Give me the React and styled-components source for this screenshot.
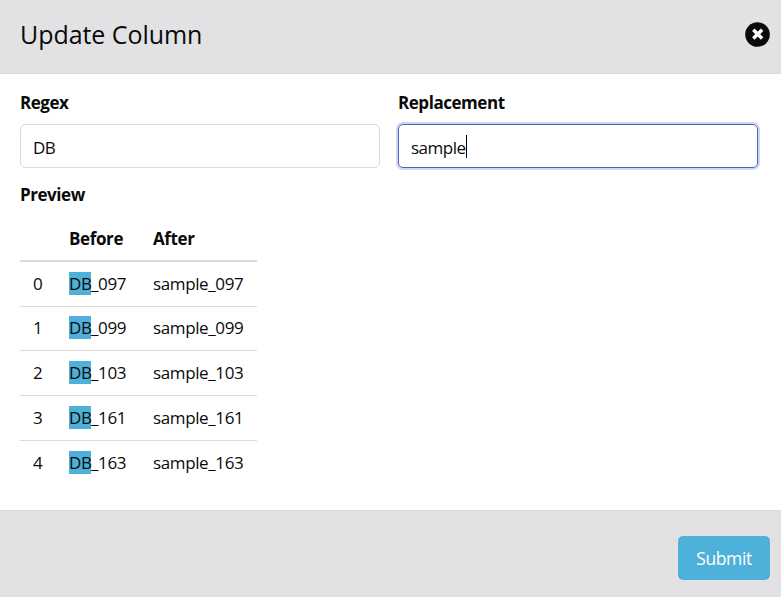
import React from "react";
import styled, { createGlobalStyle } from "styled-components";

const GlobalStyle = createGlobalStyle`
  *, *::before, *::after { box-sizing: border-box; }
  body {
    margin: 0;
    background: #fff;
    color: #0a0a0a;
    font-family: "Open Sans", "Noto Sans", sans-serif;
    font-size: 17px;
    line-height: 24px;
    font-weight: 400;
  }
`;

const Dialog = styled.div`
  display: flex;
  flex-direction: column;
  height: 597px;
  overflow: hidden;
`;

const Header = styled.header`
  display: flex;
  align-items: center;
  justify-content: space-between;
  height: 74px;
  padding: 0 11px 4px 20px;
  background: #e2e2e4;
  border-bottom: 1px solid #d8d9da;
`;

const Title = styled.h1`
  margin: 0 0 2px;
  font-size: 25px;
  line-height: 36px;
  font-weight: 400;
  letter-spacing: -0.05px;
`;

const CloseButton = styled.button`
  display: block;
  width: 25px;
  height: 25px;
  padding: 0;
  border: 0;
  background: none;

  svg { display: block; }
`;

const Body = styled.main`
  flex: 1;
  padding: 17px 23px 0 20px;
`;

const Fields = styled.div`
  display: grid;
  grid-template-columns: 360px 360px;
  column-gap: 18px;
`;

const Label = styled.div`
  font-weight: 700;
  letter-spacing: -0.45px;
`;

const Input = styled.div`
  display: flex;
  align-items: center;
  height: 44px;
  margin-top: 9px;
  padding: 3px 12px 0;
  border: 1px solid ${(p) => (p.$focused ? "#485fc7" : "#dbdbdb")};
  border-radius: 5px;
  box-shadow: ${(p) => (p.$focused ? "0 0 0 2px #d2d7f1" : "none")};
  letter-spacing: -0.5px;
`;

const Caret = styled.span`
  width: 1px;
  height: 23px;
  margin-bottom: 2px;
  background: #000;
`;

const Preview = styled.section`
  margin-top: 15px;
`;

const Table = styled.table`
  width: 237px;
  margin-top: 10px;
  table-layout: fixed;
  border-collapse: separate;
  border-spacing: 0;
  letter-spacing: -0.38px;
`;

const Col = styled.col`
  width: ${(p) => p.$width}px;
`;

const HeadCell = styled.th`
  height: 45px;
  padding: 0 0 0 13px;
  border-bottom: 2px solid #dbdbdb;
  font-weight: 700;
  text-align: left;
`;

const Cell = styled.td`
  padding: 10px 0 0 13px;
  vertical-align: top;
  border-bottom: 1px solid #dbdbdb;
  white-space: nowrap;
`;

const Row = styled.tr`
  height: ${(p) => (p.$compact ? 44 : 45)}px;

  ${Cell} { padding-top: ${(p) => (p.$compact ? 9 : 10)}px; }
  &:last-child ${Cell} { border-bottom: 0; }
`;

const Match = styled.mark`
  display: inline-block;
  width: 22px;
  height: 23px;
  vertical-align: top;
  background: #4eb1d9;
  color: inherit;
`;

const Footer = styled.footer`
  display: flex;
  align-items: center;
  justify-content: flex-end;
  height: 87px;
  padding: 8px 11px 0 20px;
  background: #e2e2e4;
  border-top: 1px solid #d8d9da;
`;

const SubmitButton = styled.button`
  width: 92px;
  height: 44px;
  padding: 0;
  border: 0;
  border-radius: 5px;
  background: #4eb1d9;
  color: #fff;
  font: inherit;
  font-size: 17.5px;
  letter-spacing: -0.4px;
`;

const rows = [
  { id: "097" },
  { id: "099", compact: true },
  { id: "103" },
  { id: "161" },
  { id: "163" },
];

export default function App() {
  return (
    <>
      <GlobalStyle />
      <Dialog role="dialog">
        <Header>
          <Title>Update Column</Title>
          <CloseButton aria-label="Close">
            <svg width="25" height="25" viewBox="0 0 25 25">
              <circle cx="12.5" cy="12.5" r="12.3" fill="#0a0a0a" />
              <path d="M8.3 7.8 17.1 16.6M17.1 7.8 8.3 16.6" stroke="#fff" strokeWidth="3.5" />
            </svg>
          </CloseButton>
        </Header>
        <Body>
          <Fields>
            <div>
              <Label>Regex</Label>
              <Input>DB</Input>
            </div>
            <div>
              <Label>Replacement</Label>
              <Input $focused>
                sample
                <Caret />
              </Input>
            </div>
          </Fields>
          <Preview>
            <Label>Preview</Label>
            <Table>
              <colgroup>
                <Col $width={36} />
                <Col $width={84} />
                <Col $width={117} />
              </colgroup>
              <thead>
                <tr>
                  <HeadCell />
                  <HeadCell>Before</HeadCell>
                  <HeadCell>After</HeadCell>
                </tr>
              </thead>
              <tbody>
                {rows.map((row, index) => (
                  <Row key={row.id} $compact={row.compact}>
                    <Cell>{index}</Cell>
                    <Cell>
                      <Match>DB</Match>_{row.id}
                    </Cell>
                    <Cell>sample_{row.id}</Cell>
                  </Row>
                ))}
              </tbody>
            </Table>
          </Preview>
        </Body>
        <Footer>
          <SubmitButton>Submit</SubmitButton>
        </Footer>
      </Dialog>
    </>
  );
}
